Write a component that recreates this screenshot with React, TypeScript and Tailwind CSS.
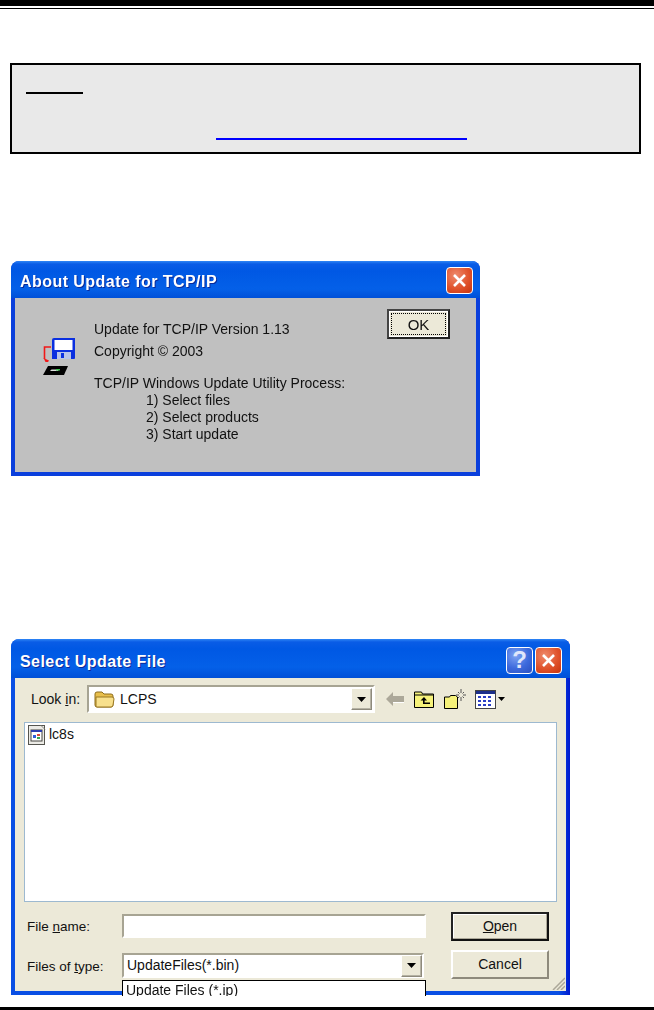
function CloseButton() {
  return (
    <div className="flex h-[27px] w-[27px] items-center justify-center rounded-[4px] border border-white bg-[radial-gradient(circle_at_35%_30%,#ee8a6c,#e0532c_55%,#c8340f)]">
      <svg width="17" height="17" viewBox="0 0 17 17">
        <path d="M3 3l11 11M14 3L3 14" stroke="#fff" strokeWidth="2.6" />
      </svg>
    </div>
  );
}

function HelpButton() {
  return (
    <div className="flex h-[27px] w-[27px] items-center justify-center rounded-[4px] border border-white bg-[radial-gradient(circle_at_35%_30%,#7fa3f2,#3c69dc_55%,#2a4fc0)] text-[24px] leading-none font-bold text-[#dfe6fb]">
      ?
    </div>
  );
}

function ArrowDown() {
  return (
    <svg width="9" height="5" viewBox="0 0 9 5">
      <path d="M0 0h9L4.5 5z" fill="#000" />
    </svg>
  );
}

function ComboArrow() {
  return (
    <div className="flex h-[22px] w-[21px] items-center justify-center border border-t-white border-r-[#8e8a7c] border-b-[#8e8a7c] border-l-white bg-[#ece9d8] shadow-[inset_-1px_-1px_0_#b5b2a4]">
      <ArrowDown />
    </div>
  );
}

function UpdateIcon() {
  return (
    <svg width="32" height="38" viewBox="0 0 32 38">
      <path d="M9 2a2 2 0 0 1 2-2h21v20a1 1 0 0 1-1 1H9z" fill="#0a2fe0" />
      <rect x="11.500" y="2" width="18" height="10" fill="#fff" />
      <rect x="14" y="14" width="14" height="7" fill="#b9c4e8" />
      <rect x="18" y="15" width="3" height="5" fill="#0a2fe0" />
      <path d="M8 9H1.500V21" fill="none" stroke="#f01818" strokeWidth="1.600" />
      <path d="M0.500 20l5.500 2.500-1 1.500H2.500z" fill="#f01818" />
      <path d="M5 28h20l-4 9H0z" fill="#000" />
      <path d="M7 33h8l1-1.500H8.500z" fill="#ddd" />
      <rect x="13" y="31" width="4" height="1.500" fill="#37c24a" />
    </svg>
  );
}

function FolderIcon() {
  return (
    <svg width="21" height="18" viewBox="0 0 21 18">
      <path d="M1 4a2 2 0 0 1 2-2h5l2 2h7a2 2 0 0 1 2 2v9a2 2 0 0 1-2 2H3a2 2 0 0 1-2-2z" fill="#e8bf4c" stroke="#8d6c1c" />
      <path d="M2 7h16a2 2 0 0 1 2 2l-1 6a2 2 0 0 1-2 2H3a1 1 0 0 1-1-1z" fill="#f8e08c" stroke="#9a7822" />
    </svg>
  );
}

function FileIcon() {
  return (
    <svg width="18" height="20" viewBox="0 0 18 20">
      <rect x="0.500" y="0.500" width="16" height="19" fill="#ecebe6" stroke="#55554f" />
      <path d="M13 0.500l4 4" stroke="#8b8b84" />
      <rect x="3" y="5" width="11" height="11" fill="#fff" stroke="#44443f" />
      <rect x="3" y="5" width="11" height="2" fill="#2c3fb0" />
      <rect x="5" y="10" width="3" height="3" fill="#2f5fd8" />
      <rect x="9" y="9" width="3" height="2" fill="#d84a3c" />
      <rect x="9" y="12" width="3" height="2" fill="#35a852" />
    </svg>
  );
}

function Toolbar() {
  return (
    <div className="flex items-center">
      <svg width="18" height="14" viewBox="0 0 18 14">
        <path d="M0 7l7-7v4h11v6H7v4z" fill="#aca899" />
        <path d="M7 10h11v1H7z" fill="#fff" />
      </svg>
      <svg className="ml-[10px]" width="20" height="18" viewBox="0 0 20 18">
        <path d="M0.500 17.500V2h7l1 2h11v13.500z" fill="#f6f27a" stroke="#000" />
        <path d="M1 5h18" stroke="#000" />
        <path d="M10 7L6.500 10.500H9V14h7v-1.600h-5.400v-1.900h2.400z" fill="#000" />
      </svg>
      <svg className="ml-[10px]" width="22" height="20" viewBox="0 0 22 20">
        <path d="M0.500 19.500V8h5l1-1.500h5l2 1.500v11.500z" fill="#f6f27a" stroke="#000" />
        <path d="M17 0v4M17 8v4M12 6h3M19 6h3M14 3l1.500 1.500M20 3l-1.500 1.500M14 9l1.500-1.500M20 9l-1.500-1.500" stroke="#555" />
      </svg>
      <svg className="ml-[9px]" width="21" height="19" viewBox="0 0 21 19">
        <rect x="0.500" y="0.500" width="20" height="18" fill="#fff" stroke="#444" />
        <rect x="1" y="1" width="19" height="3" fill="#1c2f8a" />
        <path d="M3 6h3v2H3zM8 6h3v2H8zM13 6h3v2h-3zM3 10h3v2H3zM8 10h3v2H8zM13 10h3v2h-3zM3 14h3v2H3zM8 14h3v2H8zM13 14h3v2h-3z" fill="#2b3fc4" />
      </svg>
      <div className="ml-[2px]">
        <svg width="7" height="4" viewBox="0 0 7 4">
          <path d="M0 0h7L3.500 4z" fill="#000" />
        </svg>
      </div>
    </div>
  );
}

function TitleBar({ title, className, children }: { title: string; className: string; children: React.ReactNode }) {
  return (
    <div className={`flex items-center justify-between rounded-t-[8px] bg-[linear-gradient(#2f86f5_0px,#0a5ce6_3px,#0058e4_10px,#0460e8_28px,#0050d8)] pl-[9px] ${className}`}>
      <span className="mt-[4px] text-[16px] font-bold tracking-[0.450px] text-white [text-shadow:1px_1px_0_#0a2a9a]">{title}</span>
      <div className="flex gap-[2px]">{children}</div>
    </div>
  );
}

function AboutDialog() {
  return (
    <div className="ml-[11px] w-[469px] rounded-t-[8px] bg-[#0a3fdc] px-[4px] pb-[4px] blur-[0.5px]">
      <TitleBar title="About Update for TCP/IP" className="-mx-[4px] h-[37px] pt-[1px] pr-[7px]">
        <CloseButton />
      </TitleBar>
      <div className="flex h-[174px] bg-[#c0c0c0] text-[#111]">
        <div className="mt-[40px] ml-[28px]">
          <UpdateIcon />
        </div>
        <div className="mt-[20px] ml-[19px] flex-1 text-[14px]">
          <div className="h-[22px] leading-[22px]">Update for TCP/IP Version 1.13</div>
          <div className="h-[22px] leading-[22px]">Copyright © 2003</div>
          <div className="mt-[13px] h-[17px] leading-[17px]">TCP/IP Windows Update Utility Process:</div>
          <div className="pl-[52px] leading-[17px]">
            <div>1) Select files</div>
            <div>2) Select products</div>
            <div>3) Start update</div>
          </div>
        </div>
        <div className="mt-[11px] mr-[26px] flex h-[30px] w-[63px] items-center justify-center border-2 border-t-[#444] border-r-[#222] border-b-[#222] border-l-[#444] bg-[#ece9d8] p-[2px] shadow-[inset_0_0_0_1px_#fff]">
          <div className="flex h-full w-full items-center justify-center border border-dotted border-black text-[15px] leading-none">OK</div>
        </div>
      </div>
    </div>
  );
}

function FileDialog() {
  return (
    <div className="relative ml-[11px] w-[559px] rounded-t-[8px] bg-[linear-gradient(90deg,#0a4fe4,#0a4fe4_98%,#0019cf)] px-[4px] pb-[4px] blur-[0.5px]">
      <TitleBar title="Select Update File" className="-mx-[4px] h-[39px] pt-[3px] pr-[8px]">
        <HelpButton />
        <CloseButton />
      </TitleBar>
      <div className="h-[313px] bg-[#ece9d8] px-[9px] pt-[7px] text-[14px] text-[#111]">
        <div className="flex h-[28px] items-center">
          <span className="w-[63px] pl-[7px]">
            Look <span className="underline">i</span>n:
          </span>
          <div className="flex h-[28px] w-[288px] items-center border-2 border-t-[#a7a493] border-r-white border-b-white border-l-[#a7a493] bg-white pr-[1px] pl-[5px]">
            <FolderIcon />
            <span className="ml-[5px] flex-1">LCPS</span>
            <ComboArrow />
          </div>
          <div className="ml-[11px]">
            <Toolbar />
          </div>
        </div>
        <div className="mt-[9px] h-[180px] w-[533px] border border-[#9db9d0] bg-white pt-[1px] pl-[3px]">
          <div className="flex items-center gap-[3px]">
            <FileIcon />
            <span>lc8s</span>
          </div>
        </div>
        <div className="mt-[10px] flex">
          <div className="flex w-[98px] flex-col text-[13.500px]">
            <span className="mt-[5px] h-[20px] pl-[3px] leading-[20px]">
              File <span className="underline">n</span>ame:
            </span>
            <span className="mt-[20px] h-[20px] pl-[3px] leading-[20px]">
              Files of <span className="underline">t</span>ype:
            </span>
          </div>
          <div className="flex w-[304px] flex-col">
            <div className="mt-[2px] h-[24px] w-[304px] border-2 border-t-[#a7a493] border-r-white border-b-white border-l-[#a7a493] bg-white" />
            <div className="mt-[15px] flex h-[25px] w-[302px] items-center border-2 border-t-[#a7a493] border-r-white border-b-white border-l-[#a7a493] bg-white pl-[3px]">
              <span className="flex-1">UpdateFiles(*.bin)</span>
              <ComboArrow />
            </div>
          </div>
          <div className="ml-[25px] flex flex-col gap-[9px]">
            <div className="flex h-[29px] w-[98px] items-center justify-center border-2 border-t-[#222] border-r-[#111] border-b-[#111] border-l-[#222] bg-[#ece9d8] shadow-[inset_-1px_-1px_0_#aca899,inset_1px_1px_0_#fff]">
              <span>
                <span className="underline">O</span>pen
              </span>
            </div>
            <div className="flex h-[29px] w-[98px] items-center justify-center border-2 border-t-white border-r-[#8e8a7c] border-b-[#8e8a7c] border-l-white bg-[#ece9d8]">
              Cancel
            </div>
          </div>
        </div>
        <svg className="absolute right-[5px] bottom-[5px]" width="13" height="13" viewBox="0 0 13 13">
          <path d="M1 13L13 1M5 13l8-8M9 13l4-4" stroke="#aca899" strokeWidth="1.500" />
        </svg>
      </div>
      <div className="absolute top-[341px] left-[111px] h-[16px] w-[304px] overflow-hidden border-t border-r border-l border-black bg-white pl-[3px] text-[14px] leading-[18px] text-[#111]">
        Update Files (*.ip)
      </div>
    </div>
  );
}

export default function App() {
  return (
    <div className="flex h-[1010px] w-[654px] flex-col overflow-hidden bg-white font-['Liberation_Sans',sans-serif]">
      <div className="h-[6px] shrink-0 bg-black" />
      <div className="mt-[2px] h-[1px] shrink-0 bg-black" />
      <div className="mt-[54px] ml-[10px] h-[91px] w-[631px] shrink-0 border-2 border-black bg-[#e9e9e9] pl-[14px]">
        <div className="mt-[27px] h-[2px] w-[57px] bg-black" />
        <div className="mt-[44px] ml-[190px] h-[2px] w-[251px] bg-[#0000ff]" />
      </div>
      <div className="mt-[107px] shrink-0">
        <AboutDialog />
      </div>
      <div className="mt-[163px] shrink-0">
        <FileDialog />
      </div>
      <div className="mt-auto h-[3px] shrink-0 bg-black" />
    </div>
  );
}
